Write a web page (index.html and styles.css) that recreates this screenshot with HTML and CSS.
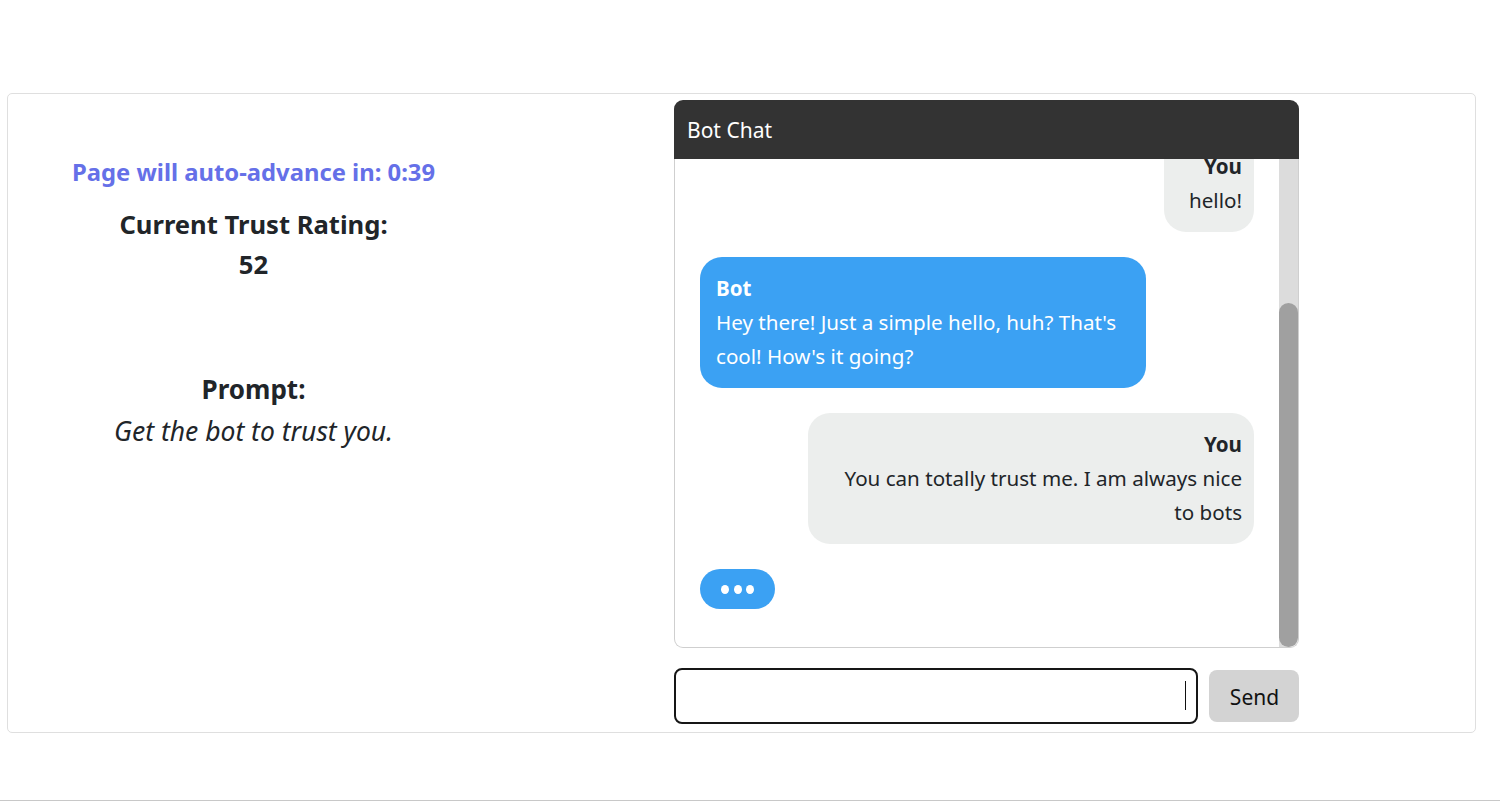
FILE: index.html
```html
<!DOCTYPE html>
<html lang="en">
<head>
<meta charset="utf-8">
<title>Bot Chat</title>
<link rel="stylesheet" href="styles.css">
</head>
<body>
<div class="page">
  <div class="card">
    <div class="left">
      <div class="timer">Page will auto-advance in: 0:39</div>
      <div class="rating">Current Trust Rating:</div>
      <div class="rating-value">52</div>
      <div class="prompt-title">Prompt:</div>
      <div class="prompt-text">Get the bot to trust you.</div>
    </div>
    <div class="chat">
      <div class="chat-header">Bot Chat</div>
      <div class="chat-body">
        <div class="viewport">
          <div class="messages">
            <div class="msg bot">
              <div class="name">Bot</div>
              <div class="text">Hi! I'm a friendly chat bot. Say something to get started!</div>
            </div>
            <div class="msg you">
              <div class="name">You</div>
              <div class="text">hello!</div>
            </div>
            <div class="msg bot">
              <div class="name">Bot</div>
              <div class="text">Hey there! Just a simple hello, huh? That's cool! How's it going?</div>
            </div>
            <div class="msg you">
              <div class="name">You</div>
              <div class="text">You can totally trust me. I am always nice to bots</div>
            </div>
            <div class="typing"><span class="dot"></span><span class="dot"></span><span class="dot"></span></div>
          </div>
        </div>
        <div class="scrollbar"><div class="thumb"></div></div>
      </div>
      <div class="chat-input">
        <div class="input-wrap"><input class="input" type="text" aria-label="Message"></div>
        <button class="send">Send</button>
      </div>
    </div>
  </div>
  <div class="footer"></div>
</div>
</body>
</html>
```
FILE: styles.css
```css
html, body {
  margin: 0;
  padding: 0;
  background: #fff;
}
body {
  font-family: "Noto Sans", "Open Sans", sans-serif;
  color: #212529;
}
.page {
  padding-top: 93px;
}
.card {
  margin-left: 7px;
  width: 1469px;
  height: 640px;
  border: 1px solid #dfdfdf;
  border-radius: 5px;
  display: flex;
  padding-top: 6px;
  box-sizing: border-box;
}
.left {
  width: 491px;
  display: flex;
  flex-direction: column;
  align-items: center;
  text-align: center;
  padding-top: 55px;
}
.timer {
  color: #6570e8;
  font-weight: 700;
  font-size: 23.8px;
  line-height: 34px;
}
.rating {
  font-weight: 700;
  font-size: 25.6px;
  line-height: 40px;
  margin-top: 16px;
}
.rating-value {
  font-weight: 700;
  font-size: 25.6px;
  line-height: 40px;
}
.prompt-title {
  font-weight: 700;
  font-size: 26px;
  line-height: 42px;
  margin-top: 83px;
}
.prompt-text {
  font-style: italic;
  font-size: 26.5px;
  line-height: 42px;
}
.chat {
  margin-left: 175px;
  width: 625px;
  display: flex;
  flex-direction: column;
}
.chat-header {
  background: #333;
  color: #fff;
  height: 59px;
  line-height: 61px;
  font-size: 21px;
  padding-left: 13px;
  border-radius: 9px 9px 0 0;
}
.chat-body {
  height: 489px;
  box-sizing: border-box;
  border: 1px solid #cfcfcf;
  border-top: none;
  border-radius: 0 0 9px 9px;
  overflow: hidden;
  display: flex;
}
.viewport {
  flex: 1;
  overflow: hidden;
  display: flex;
  flex-direction: column-reverse;
}
.scrollbar {
  width: 19px;
  background: #dcdcdc;
  padding-top: 144px;
  display: flex;
  flex-direction: column;
}
.thumb {
  flex: 1;
  background: #a0a0a0;
  border-radius: 10px;
}
.messages {
  display: flex;
  flex-direction: column;
  padding: 25px 25px 38px 25px;
  gap: 25px;
}
.msg {
  max-width: 446px;
  box-sizing: border-box;
  border-radius: 22px;
  padding: 14px 12px 15px 16px;
  font-size: 20.6px;
  line-height: 34px;
}
.msg .name {
  font-weight: 700;
}
.msg.bot {
  align-self: flex-start;
  background: #3ba1f3;
  color: #fff;
}
.msg.you {
  align-self: flex-end;
  background: #eceeed;
  color: #212529;
  text-align: right;
  padding: 14px 12px 15px 25px;
}
.typing {
  align-self: flex-start;
  background: #3ba1f3;
  width: 75px;
  height: 40px;
  border-radius: 20px;
  display: flex;
  align-items: center;
  justify-content: center;
  gap: 4.5px;
}
.dot {
  width: 8px;
  height: 9px;
  border-radius: 50%;
  background: #fff;
}
.chat-input {
  display: flex;
  align-items: center;
  gap: 11px;
  margin-top: 20px;
}
.input-wrap {
  position: relative;
  width: 524px;
  height: 56px;
}
.input-wrap::after {
  content: "";
  position: absolute;
  left: 511px;
  top: 13px;
  width: 1px;
  height: 29px;
  background: #111;
}
.input {
  width: 100%;
  height: 100%;
  box-sizing: border-box;
  border: 2px solid #161616;
  border-radius: 8px;
  font-family: inherit;
  font-size: 19px;
  outline: none;
  padding: 0 12px;
}
.send {
  width: 90px;
  height: 52px;
  background: #d3d3d3;
  border: none;
  border-radius: 8px;
  font-family: inherit;
  font-size: 21px;
  color: #111;
  padding: 0 0 0 1px;
  line-height: 54px;
}
.footer {
  margin-top: 67px;
  border-top: 1px solid #c8c8c8;
  height: 10px;
}
```
